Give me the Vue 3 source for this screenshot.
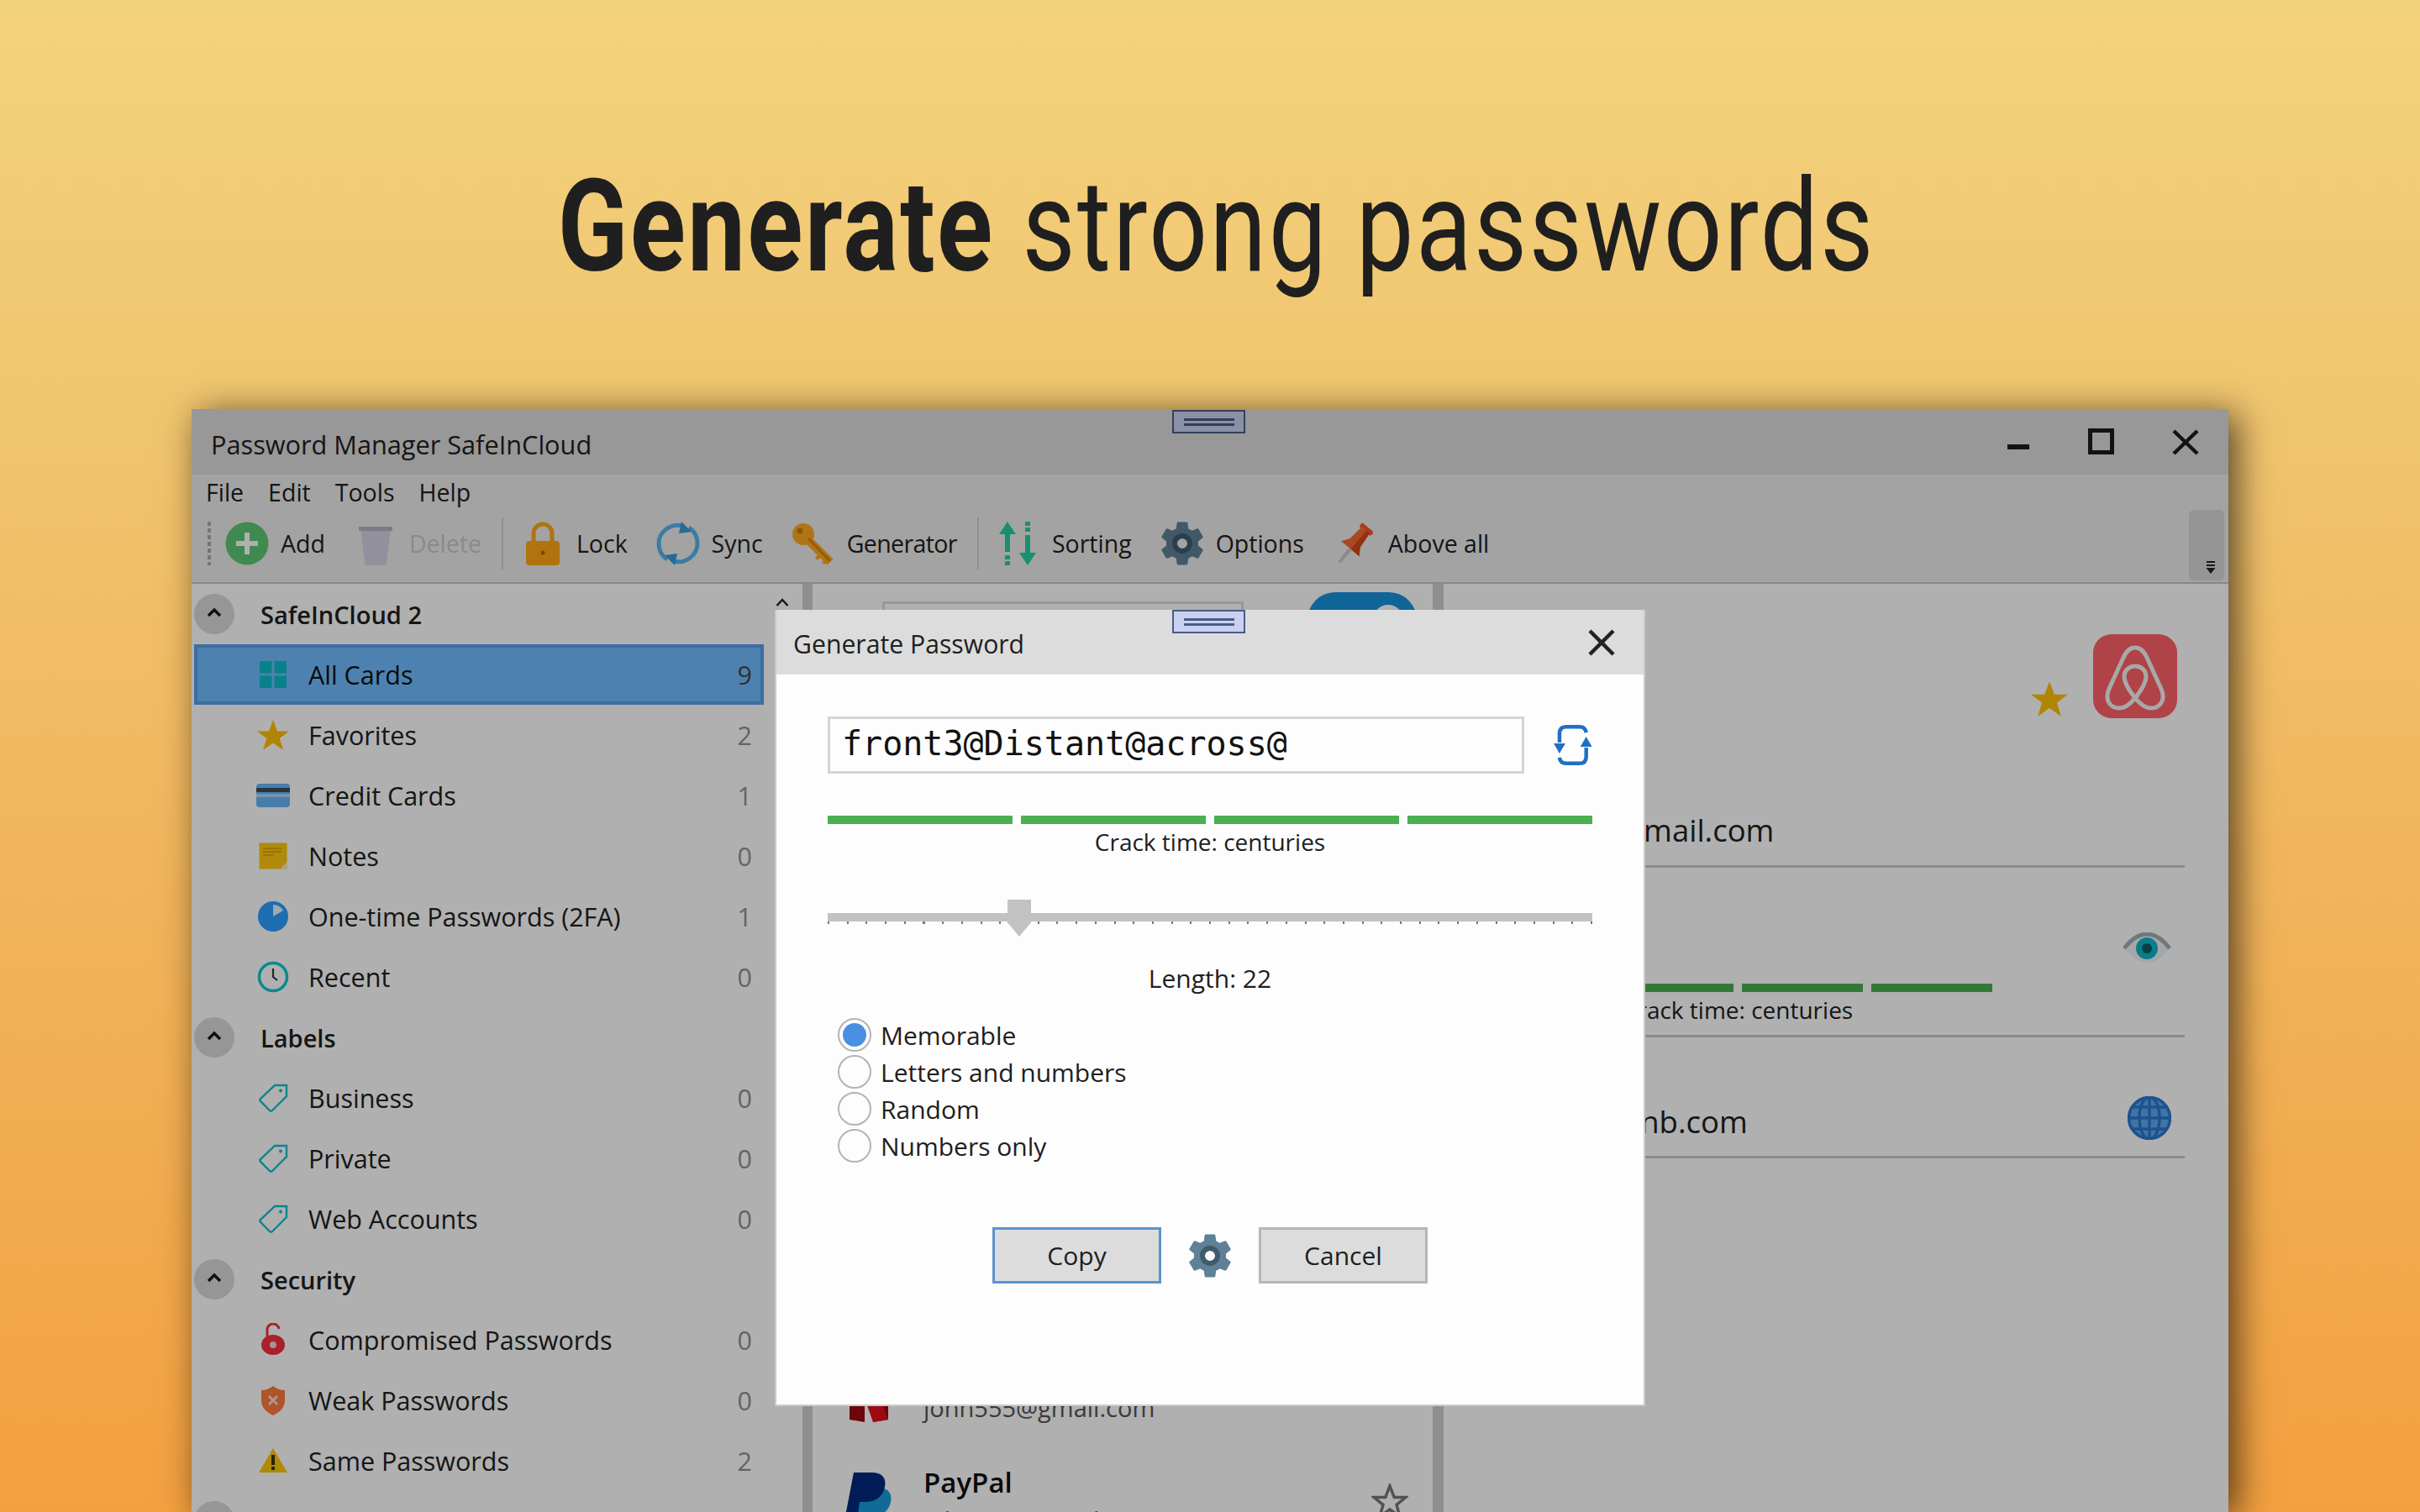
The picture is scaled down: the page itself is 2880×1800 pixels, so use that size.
<template>
  <div class="page">
    <h1 class="headline"><span class="headline-text"><b>Generate</b> strong passwords</span></h1>

    <div class="window">
      <div class="grab"><i></i><i></i></div>

      <!-- title bar -->
      <div class="titlebar">
        <span class="title">Password Manager SafeInCloud</span>
        <svg class="win-btns" width="232" height="36" viewBox="0 0 232 36">
          <rect x="0" y="21" width="26" height="6" fill="#1c1c1c" />
          <rect x="98.500" y="4.500" width="26" height="26" fill="none" stroke="#1c1c1c" stroke-width="5" />
          <path d="M198 5l28 27M226 5l-28 27" stroke="#1c1c1c" stroke-width="4.500" fill="none" />
        </svg>
      </div>

      <nav class="menu">
        <span v-for="m in menu" :key="m">{{ m }}</span>
      </nav>

      <!-- toolbar -->
      <div class="toolbar">
        <div class="gripper"></div>
        <template v-for="t in tools" :key="t.label">
          <div v-if="t.sepBefore" class="tool-sep"></div>
          <div class="tool" :class="{ disabled: t.disabled, tight: t.tight }">
            <svg class="tool-icon" width="52" height="52" viewBox="0 0 52 52" v-html="icons[t.icon]"></svg>
            <span>{{ t.label }}</span>
          </div>
        </template>
        <div class="overflow">
          <svg width="14" height="16" viewBox="0 0 14 16"><path d="M2 1h10M2 5h10" stroke="#222" stroke-width="2" /><path d="M1.500 8h11L7 15z" fill="#222" /></svg>
        </div>
      </div>

      <div class="body">
        <!-- left side list -->
        <aside class="sidebar">
          <svg class="scroll-up" width="16" height="10" viewBox="0 0 16 10"><path d="M1.500 9L8 2l6.500 7" fill="none" stroke="#222" stroke-width="2.500" /></svg>
          <template v-for="row in sideRows" :key="row.label">
            <div v-if="row.header" class="side-head">
              <span class="chev">
                <svg width="20" height="12" viewBox="0 0 20 12"><path d="M3 10l7-7 7 7" fill="none" stroke="#1a1a1a" stroke-width="3.500" /></svg>
              </span>
              <span>{{ row.label }}</span>
            </div>
            <div v-else class="side-row" :class="{ selected: row.selected }">
              <svg class="side-icon" width="40" height="40" viewBox="0 0 40 40" v-html="icons[row.icon]"></svg>
              <span class="side-label">{{ row.label }}</span>
              <span class="side-count">{{ row.count }}</span>
            </div>
          </template>
        </aside>

        <!-- middle card list -->
        <section class="cards">
          <div class="search-row">
            <div class="search"></div>
            <div class="pill"><i></i></div>
          </div>
          <div class="card-list">
            <div v-for="c in cards" :key="c.title" class="card">
              <svg class="card-logo" width="54" height="80" viewBox="0 0 54 80" v-html="icons[c.icon]"></svg>
              <div class="card-text">
                <div class="card-title">{{ c.title }}</div>
                <div class="card-sub">{{ c.sub }}</div>
              </div>
              <svg v-if="c.star" class="card-star" width="44" height="42" viewBox="0 0 44 42">
                <path d="M22 3l5.200 13.500H41L30 25.500l4 14L22 31 10 39.500l4-14-11-9h13.800z" fill="none" stroke="#777" stroke-width="3.500" />
              </svg>
            </div>
          </div>
        </section>

        <!-- right detail pane -->
        <section class="detail">
          <div class="detail-head">
            <svg width="50" height="46" viewBox="0 0 40 40" v-html="icons.star"></svg>
            <svg width="100" height="100" viewBox="0 0 100 100">
              <rect width="100" height="100" rx="22" fill="#ff6168" />
              <g fill="none" stroke="#f4f4f4" stroke-width="5" stroke-linejoin="round">
                <path d="M50 16C43 16 39 21 35 30L19 65C13 79 21 88 31 88 39 88 45 82 50 76 55 82 61 88 69 88 79 88 87 79 81 65L65 30C61 21 57 16 50 16Z" />
                <path d="M50 76C42 66 37 57 37 50 37 43 43 38 50 38 57 38 63 43 63 50 63 57 58 66 50 76Z" />
              </g>
            </svg>
          </div>
          <div class="field first">
            <span class="value">john555@gmail.com</span>
          </div>
          <div class="field pass">
            <div class="pass-row">
              <span class="value">••••••••</span>
              <svg width="58" height="38" viewBox="0 0 58 38">
                <path d="M2 19C12 6 20 2 29 2s17 4 27 17C46 32 38 36 29 36S12 32 2 19Z" fill="#f0f4f6" />
                <path d="M2 19C12 6 20 2 29 2s17 4 27 17" fill="none" stroke="#9fb0b8" stroke-width="5" />
                <circle cx="29" cy="19" r="13" fill="#10b4c8" />
                <circle cx="29" cy="19" r="6" fill="#0a5a68" />
              </svg>
            </div>
            <div class="strength small">
              <div class="bars"><i v-for="n in 4" :key="n"></i></div>
              <div class="crack">Crack time: centuries</div>
            </div>
          </div>
          <div class="field web">
            <span class="value">www.airbnb.com</span>
            <svg width="52" height="52" viewBox="0 0 52 52">
              <circle cx="26" cy="26" r="25" fill="#5fa9ea" />
              <g fill="none" stroke="#2a78d0" stroke-width="3.500">
                <ellipse cx="26" cy="26" rx="12" ry="25" />
                <path d="M26 1v50M1 26h50M5 13h42M5 39h42" />
                <circle cx="26" cy="26" r="24.500" />
              </g>
            </svg>
          </div>
        </section>
      </div>

      <div class="dim"></div>

      <!-- generator dialog -->
      <div class="dialog">
        <div class="grab light"><i></i><i></i></div>
        <header class="dialog-head">
          <span class="dialog-title">Generate Password</span>
          <svg width="32" height="32" viewBox="0 0 32 32"><path d="M2 2l28 28M30 2L2 30" stroke="#222" stroke-width="4.500" /></svg>
        </header>
        <div class="dialog-body">
          <div class="pw-row">
            <div class="pw-input">front3@Distant@across@</div>
            <svg class="refresh" width="46" height="50" viewBox="0 0 46 50">
              <g fill="none" stroke="#1f6fc5" stroke-width="4.500">
                <path d="M7 22V11Q7 3 15 3H31Q38 3 39 10" />
                <path d="M39 28V39Q39 47 31 47H15Q8 47 7 40" />
              </g>
              <path d="M0 23h14L7 35zM32 27h14L39 15z" fill="#1f6fc5" />
            </svg>
          </div>

          <div class="strength">
            <div class="bars"><i v-for="n in 4" :key="n"></i></div>
            <div class="crack">Crack time: centuries</div>
          </div>

          <div class="slider"><div class="thumb"></div></div>
          <div class="length">Length: 22</div>

          <div class="radios">
            <div v-for="(r, i) in modes" :key="r" class="radio">
              <span class="radio-dot" :class="{ on: i === 0 }"></span>
              <span>{{ r }}</span>
            </div>
          </div>

          <div class="actions">
            <button class="btn primary">Copy</button>
            <svg width="52" height="56" viewBox="0 0 52 56" v-html="icons.gearTall"></svg>
            <button class="btn">Cancel</button>
          </div>
        </div>
      </div>
    </div>
  </div>
</template>

<script setup>
const menu = ['File', 'Edit', 'Tools', 'Help']

const gearPath = 'M19.140 12.940c.04-.3.06-.61.06-.94 0-.32-.02-.64-.07-.94l2.030-1.580c.18-.14.23-.41.12-.61l-1.920-3.320c-.12-.22-.37-.29-.59-.22l-2.390.96c-.5-.38-1.030-.7-1.620-.94l-.36-2.540c-.04-.24-.24-.41-.48-.41h-3.840c-.24 0-.43.17-.47.41l-.36 2.540c-.59.24-1.130.57-1.620.94l-2.390-.96c-.22-.08-.47 0-.59.22L2.740 8.870c-.12.21-.08.47.12.61l2.030 1.580c-.05.3-.09.63-.09.94s.02.64.07.94l-2.030 1.580c-.18.14-.23.41-.12.61l1.920 3.320c.12.22.37.29.59.22l2.390-.96c.5.38 1.030.7 1.620.94l.36 2.540c.05.24.24.41.48.41h3.840c.24 0 .44-.17.47-.41l.36-2.540c.59-.24 1.130-.56 1.620-.94l2.390.96c.22.08.47 0 .59-.22l1.920-3.320c.12-.22.07-.47-.12-.61l-2.010-1.580zM12 14.300c-1.270 0-2.300-1.030-2.300-2.300s1.030-2.300 2.300-2.300 2.300 1.030 2.300 2.300-1.030 2.300-2.300 2.300z'

const gear = (cy) => '<g transform="translate(26 ' + cy + ') scale(2.650) translate(-12 -12)"><path fill-rule="evenodd" d="' + gearPath + '" fill="#5f8096"/><circle cx="12" cy="12" r="3.400" fill="none" stroke="#3f5b6e" stroke-width="2.200"/></g>'

const icons = {
  add: '<circle cx="26" cy="26" r="25.500" fill="#5cc873"/><path d="M26 13v26M13 26h26" stroke="#fff" stroke-width="6"/>',
  trash: '<path d="M8 8h36l-5 41a3 3 0 0 1-3 3H16a3 3 0 0 1-3-3z" fill="#d6d1e4"/><rect x="6" y="6" width="40" height="5" fill="#b5aec8"/>',
  lock: '<path d="M15 25V14a11 11 0 0 1 22 0v11" fill="none" stroke="#ffa716" stroke-width="5"/><rect x="6" y="23" width="40" height="29" rx="4" fill="#ffa716"/><circle cx="26" cy="37" r="2.500" fill="#a86a00"/>',
  sync: '<g fill="none" stroke="#58b4ee" stroke-width="5"><path d="M32 5C16 1 3 13 3 26c0 8 4 15 10 19"/><path d="M20 47c16 4 29-8 29-21 0-8-4-15-10-19"/></g><path d="M30 0l12 12-15 2zM22 52L10 40l15-2z" fill="#3a98d8"/>',
  key: '<circle cx="14" cy="15" r="13" fill="#ffa920"/><path d="M16 18l30 30" stroke="#ffa920" stroke-width="10"/><path d="M33 38l-5 5 3 3 5-5zM40 44l-4 4 3 3 4-4z" fill="#ffa920"/><path d="M20 20l26 27" stroke="#d9860c" stroke-width="3"/><circle cx="10" cy="11" r="3.500" fill="#c97e08"/>',
  sort: '<g fill="#26cfa2"><path d="M13 0l10 15H16V36H10V15H3z"/><rect x="10" y="40" width="6" height="5"/><rect x="10" y="47" width="6" height="5"/><path d="M37 52L27 37h7V16h6v21h7z"/><rect x="34" y="0" width="6" height="5"/><rect x="34" y="7" width="6" height="5"/></g>',
  gear: gear(26),
  gearTall: gear(28),
  pin: '<g transform="rotate(40 26 26)"><path d="M25 36h3l-1 18h-1z" fill="#c2c8cc" stroke="#c2c8cc" stroke-width="2"/><rect x="17" y="1" width="18" height="6" rx="2" fill="#f25a26"/><path d="M20 5h12l2 20 6 9H12l6-9z" fill="#f56a30"/><path d="M27 5h5l2 20 6 9H27z" fill="#d2461c"/></g>',
  grid: '<g fill="#0cbcc8"><rect x="4" y="4" width="14.500" height="14.500"/><rect x="21.500" y="4" width="14.500" height="14.500"/><rect x="4" y="21.500" width="14.500" height="14.500"/><rect x="21.500" y="21.500" width="14.500" height="14.500"/></g>',
  star: '<path d="M20 2l5 13.500h14L27.800 24l4.200 14-12-8.500L8 38l4.200-14L1 15.500h14z" fill="#ffc107"/>',
  card: '<rect y="6" width="40" height="28" rx="4" fill="#68b5f8"/><rect y="11" width="40" height="5" fill="#3d4d58"/><rect y="18" width="40" height="4" fill="#a9d6fb"/>',
  note: '<rect x="3.500" y="4.500" width="33" height="31" fill="#ffc90c"/><path d="M8 11h22M8 15h22M8 19h12" stroke="#d99f00" stroke-width="1.500"/><path d="M28 35.500l8.500-8.500v8.500z" fill="#f4edcf"/>',
  otp: '<circle cx="20" cy="20" r="18" fill="#2a9eff"/><path d="M20 20V6a14 14 0 0 1 12 7z" fill="#e6f3ff"/>',
  clock: '<circle cx="20" cy="20" r="16.500" fill="none" stroke="#12c6d2" stroke-width="3.500"/><path d="M20 10v10l5 4" fill="none" stroke="#2c3a40" stroke-width="2.200"/>',
  tag: '<path d="M22 5h14v13L19 35a2 2 0 0 1-3 0L5 24a2 2 0 0 1 0-3z" fill="none" stroke="#14c0cc" stroke-width="2.400"/><circle cx="29" cy="11.500" r="2" fill="#14c0cc"/>',
  compromised: '<path d="M13 18V9a7 7 0 0 1 14-2" fill="none" stroke="#f5303c" stroke-width="3"/><ellipse cx="20" cy="26" rx="14" ry="12" fill="#f5303c"/><circle cx="20" cy="26" r="4" fill="#f7d6d8"/>',
  shield: '<path d="M20 3c4 3 9 5 14 5v12c0 9-6 14-14 18C12 34 6 29 6 20V8c5 0 10-2 14-5z" fill="#ff7a3c"/><path d="M15 15l10 10M25 15L15 25" stroke="#f6dcd2" stroke-width="3"/>',
  warn: '<path d="M20 5l17 29H3z" fill="#ffc907"/><rect x="18" y="13" width="4" height="12" fill="#3c3308"/><rect x="18" y="27" width="4" height="4" fill="#3c3308"/>',
  netflix: '<path d="M4 0h18v80L4 77z" fill="#9d0a12"/><path d="M32 0h18v77l-18 3z" fill="#9d0a12"/><path d="M4 0h18l28 77-18 3z" fill="#e50e1c"/>',
  paypal: '<path d="M16 24h22c13 0 17 8 15 17-2 11-10 16-20 16h-7l-3 20H8z" fill="#1a9cdb"/><path d="M9 6h22c12 0 17 7 15 17-2 12-12 18-22 18h-8l-3 22H-2z" fill="#04297e"/>'
}

const tools = [
  { icon: 'add', label: 'Add' },
  { icon: 'trash', label: 'Delete', disabled: true },
  { icon: 'lock', label: 'Lock', sepBefore: true },
  { icon: 'sync', label: 'Sync' },
  { icon: 'key', label: 'Generator', tight: true },
  { icon: 'sort', label: 'Sorting', sepBefore: true },
  { icon: 'gear', label: 'Options' },
  { icon: 'pin', label: 'Above all' }
]

const sideRows = [
  { header: true, label: 'SafeInCloud 2' },
  { icon: 'grid', label: 'All Cards', count: 9, selected: true },
  { icon: 'star', label: 'Favorites', count: 2 },
  { icon: 'card', label: 'Credit Cards', count: 1 },
  { icon: 'note', label: 'Notes', count: 0 },
  { icon: 'otp', label: 'One-time Passwords (2FA)', count: 1 },
  { icon: 'clock', label: 'Recent', count: 0 },
  { header: true, label: 'Labels' },
  { icon: 'tag', label: 'Business', count: 0 },
  { icon: 'tag', label: 'Private', count: 0 },
  { icon: 'tag', label: 'Web Accounts', count: 0 },
  { header: true, label: 'Security' },
  { icon: 'compromised', label: 'Compromised Passwords', count: 0 },
  { icon: 'shield', label: 'Weak Passwords', count: 0 },
  { icon: 'warn', label: 'Same Passwords', count: 2 },
  { header: true, label: ' ' }
]

const cards = [
  { icon: 'netflix', title: 'Netflix', sub: 'john555@gmail.com' },
  { icon: 'paypal', title: 'PayPal', sub: 'john555@gmail.com', star: true }
]

const modes = ['Memorable', 'Letters and numbers', 'Random', 'Numbers only']
</script>

<style>
html, body {
  margin: 0;
  overflow: hidden;
}
</style>

<style scoped>
.page {
  width: 2880px;
  height: 1800px;
  overflow: hidden;
  display: flex;
  flex-direction: column;
  align-items: center;
  background: linear-gradient(180deg, #f3d27e 0%, #f0c36d 30%, #f1b45a 60%, #f3a040 100%);
  font-family: "Open Sans", "Noto Sans", sans-serif;
  color: #202020;
}

.headline {
  height: 487px;
  margin: 0;
  padding: 52px 0 0 16px;
  box-sizing: border-box;
  display: flex;
  align-items: center;
  justify-content: center;
  font-family: Roboto, sans-serif;
  font-size: 152px;
  font-weight: 400;
  letter-spacing: 3px;
  color: #1f1f1f;
  white-space: nowrap;
}
.headline-text {
  display: inline-block;
  transform: scaleX(0.806);
}
.headline b {
  font-weight: 700;
}

.window {
  position: relative;
  flex: 1;
  width: 2424px;
  display: flex;
  flex-direction: column;
  background: #fff;
  box-shadow: 10px 6px 40px rgba(0, 0, 0, 0.65);
  font-size: 30px;
  min-height: 0;
}

.grab {
  position: absolute;
  top: 1px;
  left: 1167px;
  width: 87px;
  height: 28px;
  box-sizing: border-box;
  border: 2px solid #4c5a86;
  background: #c8d2f0;
  display: flex;
  flex-direction: column;
  justify-content: center;
  align-items: center;
  gap: 3px;
}
.grab i {
  width: 60px;
  height: 3px;
  background: #4c5a86;
}
.grab.light {
  top: 0;
  left: 471px;
  z-index: 2;
}

.titlebar {
  height: 78px;
  flex: none;
  display: flex;
  align-items: center;
  justify-content: space-between;
  padding: 0 31px 0 23px;
  background: #dcdcdc;
  font-size: 30.700px;
}
.title {
  margin-top: 6px;
}

.menu {
  height: 42px;
  flex: none;
  display: flex;
  align-items: center;
  gap: 29px;
  padding-left: 17px;
  background: #ededed;
  font-size: 28.500px;
}

.toolbar {
  height: 88px;
  flex: none;
  box-sizing: border-box;
  display: flex;
  align-items: center;
  padding: 0 5px 6px 19px;
  background: #ededed;
  border-bottom: 2px solid #c6c6c6;
  font-size: 28.500px;
}
.gripper {
  width: 4px;
  height: 52px;
  background: repeating-linear-gradient(180deg, #aaa 0 5px, transparent 5px 8px);
}
.tool {
  display: flex;
  align-items: center;
  gap: 14px;
  padding: 0 17px;
}
.tool.disabled {
  color: #c8c8c8;
}
.tool.tight span {
  letter-spacing: -0.6px;
}
.tool-sep {
  width: 2px;
  height: 62px;
  margin: 0 4px 0 7px;
  background: #cfcfcf;
}
.overflow {
  margin-left: auto;
  width: 42px;
  height: 84px;
  align-self: flex-start;
  box-sizing: border-box;
  padding: 61px 0 0 19px;
  background: #d8d8d8;
  border-radius: 6px;
}
.overflow svg {
  display: block;
}

.body {
  flex: 1;
  min-height: 0;
  display: flex;
  overflow: hidden;
  background: #fff;
}

.sidebar {
  position: relative;
  flex: none;
  width: 739px;
  box-sizing: border-box;
  padding: 0 46px 0 3px;
  border-right: 12px solid #d0d0d0;
  font-size: 30.500px;
}
.scroll-up {
  position: absolute;
  top: 17px;
  left: 695px;
}
.side-head,
.side-row {
  height: 72px;
  display: flex;
  align-items: center;
  box-sizing: border-box;
}
.side-head {
  font-weight: 600;
  font-size: 29px;
  gap: 31px;
}
.chev {
  width: 48px;
  height: 48px;
  border-radius: 50%;
  background: #dadada;
  display: flex;
  align-items: center;
  justify-content: center;
  padding-bottom: 4px;
  box-sizing: border-box;
}
.side-row {
  padding: 0 14px 0 74px;
  gap: 22px;
}
.side-row.selected {
  background: #70bdff;
  border: 4px solid #5b9fec;
  padding: 0 10px 0 70px;
  color: #111;
}
.side-label {
  flex: 1;
}
.side-count {
  color: #929292;
}
.selected .side-count {
  color: #444;
}

.cards {
  flex: none;
  width: 751px;
  box-sizing: border-box;
  border-right: 13px solid #d0d0d0;
}
.search-row {
  height: 91px;
  display: flex;
  align-items: flex-start;
  padding: 21px 0 0 83px;
  box-sizing: border-box;
}
.search {
  width: 430px;
  height: 66px;
  box-sizing: border-box;
  border: 3px solid #dcdcdc;
}
.pill {
  position: relative;
  width: 130px;
  height: 66px;
  margin: -11px 0 0 76px;
  border-radius: 33px;
  background: #1693dc;
}
.pill i {
  position: absolute;
  top: 15px;
  right: 16px;
  width: 36px;
  height: 36px;
  border-radius: 50%;
  background: #fff;
}
.card-list {
  padding-top: 800px;
}
.card {
  height: 134px;
  display: flex;
  align-items: center;
  padding: 0 29px 0 40px;
}
.card-text {
  margin-left: 38px;
}
.card-title {
  font-size: 33px;
  line-height: 46px;
  font-weight: 600;
  color: #111;
}
.card-sub {
  line-height: 44px;
  font-size: 29px;
  color: #555;
}
.card-star {
  margin-left: auto;
}

.detail {
  flex: 1;
  box-sizing: border-box;
  padding: 60px 52px 0 47px;
}
.detail-head {
  height: 100px;
  display: flex;
  align-items: flex-end;
  justify-content: flex-end;
  gap: 27px;
  padding-right: 9px;
  margin-bottom: 100px;
}
.field {
  border-bottom: 3px solid #c8c8c8;
  padding-bottom: 9px;
  font-size: 36.500px;
}
.value {
  line-height: 66px;
}
.field.first .value {
  display: block;
}
.field.pass {
  padding-top: 70px;
}
.pass-row,
.field.web {
  display: flex;
  align-items: center;
  justify-content: space-between;
  padding-right: 16px;
}
.pass-row {
  height: 52px;
}
.field.web {
  padding-top: 67px;
  padding-bottom: 8px;
}
.field.web .value {
  margin-left: 26px;
}
.field.web svg {
  margin-top: -8px;
}

.strength {
  width: 910px;
}
.strength.small {
  width: 606px;
  margin-top: 16px;
}
.bars {
  display: flex;
  gap: 10px;
}
.bars i {
  flex: 1;
  height: 10px;
  background: #4caf50;
}
.crack {
  height: 42px;
  line-height: 42px;
  font-size: 28px;
  text-align: center;
}

.dim {
  position: absolute;
  inset: 0;
  background: rgba(0, 0, 0, 0.31);
}

.dialog {
  position: absolute;
  top: 239px;
  left: 694px;
  width: 1036px;
  height: 948px;
  box-sizing: border-box;
  display: flex;
  flex-direction: column;
  background: #fdfdfd;
  border: 2px solid #cbcbcb;
  border-top: 0;
}
.dialog-head {
  height: 77px;
  flex: none;
  display: flex;
  align-items: center;
  justify-content: space-between;
  padding: 0 34px 0 20px;
  background: #dcdcdc;
  font-size: 30.200px;
}
.dialog-title {
  margin-top: 4px;
}
.dialog-body {
  padding: 50px 61px 0 61px;
  display: flex;
  flex-direction: column;
}
.pw-row {
  display: flex;
  align-items: center;
  gap: 35px;
  height: 68px;
}
.pw-input {
  width: 836px;
  height: 68px;
  box-sizing: border-box;
  border: 3px solid #d4d4d4;
  padding-left: 14px;
  line-height: 58px;
  font-family: "DejaVu Sans Mono", "Liberation Mono", monospace;
  font-size: 40px;
  color: #111;
}
.dialog-body > .strength {
  margin-top: 50px;
}
.slider {
  position: relative;
  width: 910px;
  height: 13px;
  margin-top: 64px;
  background:
    linear-gradient(#c2c2c2, #c2c2c2) top / 100% 10px no-repeat,
    repeating-linear-gradient(90deg, #777 0 2px, transparent 2px 22.700px) 0 10px / 100% 3px no-repeat;
}
.thumb {
  position: absolute;
  left: 214px;
  top: -16px;
  width: 28px;
  height: 44px;
  background: #c2c2c2;
  clip-path: polygon(0 0, 100% 0, 100% 62%, 50% 100%, 0 62%);
}
.length {
  margin-top: 43px;
  line-height: 44px;
  text-align: center;
}
.radios {
  margin: 23px 0 0 12px;
  display: flex;
  flex-direction: column;
}
.radio {
  height: 44px;
  display: flex;
  align-items: center;
  gap: 11px;
}
.radio-dot {
  position: relative;
  width: 40px;
  height: 40px;
  box-sizing: border-box;
  border: 2px solid #b4b4b4;
  border-radius: 50%;
}
.radio-dot.on::after {
  content: "";
  position: absolute;
  inset: 4px;
  border-radius: 50%;
  background: #4a90e2;
}
.actions {
  margin-top: 75px;
  display: flex;
  justify-content: center;
  align-items: center;
  gap: 32px;
}
.btn {
  width: 201px;
  height: 67px;
  box-sizing: border-box;
  border: 3px solid #b6b6b6;
  background: #dcdcdc;
  font: inherit;
  color: #202020;
  padding: 0;
}
.btn.primary {
  border-color: #5b93cd;
}
</style>
